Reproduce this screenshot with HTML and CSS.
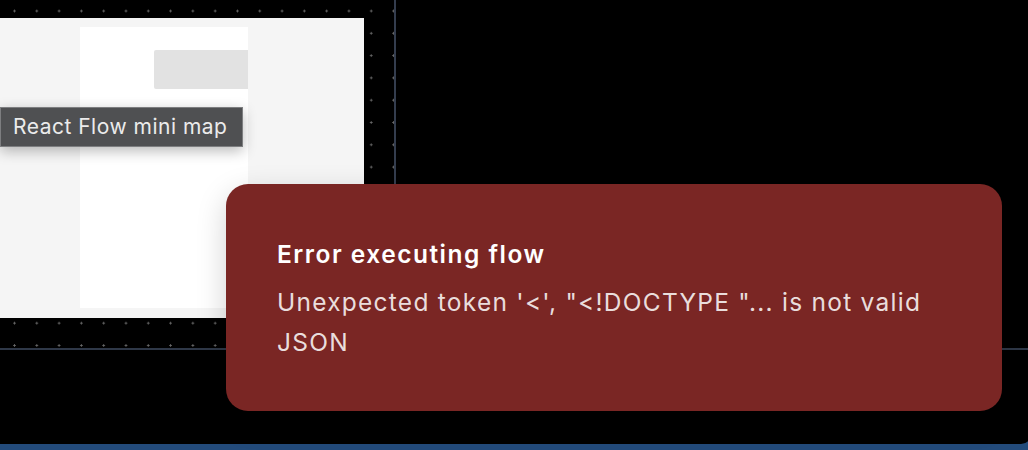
FILE: index.html
```html
<!DOCTYPE html>
<html lang="en">
<head>
<meta charset="utf-8">
<title>Flow</title>
<link rel="stylesheet" href="styles.css">
</head>
<body>
<div class="app">
  <div class="top">
    <div class="pane">
      <div class="minimap">
        <div class="viewport">
          <div class="node"></div>
        </div>
      </div>
      <div class="tooltip">React Flow mini map</div>
    </div>
    <div class="side"></div>
  </div>
  <div class="bottom"></div>
  <div class="toast">
    <div class="toast-title">Error executing flow</div>
    <div class="toast-desc">Unexpected token '&lt;', "&lt;!DOCTYPE "... is not valid JSON</div>
  </div>
</div>
</body>
</html>
```

FILE: styles.css
```css
html, body {
  margin: 0;
  padding: 0;
  height: 100%;
}
body {
  background: #234b7b;
  overflow: hidden;
  font-family: Inter, "Noto Sans", sans-serif;
}
.app {
  position: relative;
  width: calc(100% + 3px);
  height: 444px;
  background: #000;
  border-bottom-right-radius: 10px;
  display: flex;
  flex-direction: column;
}
.top {
  display: flex;
  height: 350px;
  border-bottom: 2px solid #2f3848;
  box-sizing: border-box;
}
.pane {
  position: relative;
  width: 394px;
  border-right: 2px solid #343d4e;
  background-color: #000;
  background-image: radial-gradient(circle, #6a6a6a 0.9px, transparent 1.3px);
  background-size: 22.3px 22.3px;
  background-position: 3.35px -0.15px;
}
.side {
  flex: 1;
}
.bottom {
  flex: 1;
}
.minimap {
  position: absolute;
  left: 0;
  top: 18px;
  width: 364px;
  height: 300px;
  background: #f5f5f5;
}
.viewport {
  position: absolute;
  left: 80px;
  top: 9px;
  width: 168px;
  height: 281px;
  background: #fff;
}
.node {
  position: absolute;
  left: 74px;
  top: 23px;
  width: 94px;
  height: 39px;
  background: #e2e2e2;
  border-radius: 2px 0 0 2px;
}
.tooltip {
  position: absolute;
  left: 0;
  top: 107px;
  width: 243px;
  height: 40px;
  box-sizing: border-box;
  padding: 0 0 1px 12px;
  display: flex;
  align-items: center;
  white-space: nowrap;
  background: #4f5052;
  border: 1px solid #7d7e80;
  color: #ebebeb;
  font-size: 21px;
  letter-spacing: 0.5px;
  box-shadow: 0 4px 14px rgba(0, 0, 0, 0.28);
}
.toast {
  position: absolute;
  left: 226px;
  top: 184px;
  width: 776px;
  height: 227px;
  box-sizing: border-box;
  padding: 54px 51px 0 51px;
  background: #7a2624;
  border-radius: 22px;
  box-shadow: 0 10px 30px rgba(0, 0, 0, 0.18);
  color: #fff;
}
.toast-title {
  font-size: 24.5px;
  line-height: 32px;
  font-weight: 600;
  letter-spacing: 1.5px;
  margin-bottom: 12px;
}
.toast-desc {
  font-size: 24.5px;
  line-height: 40px;
  letter-spacing: 1.25px;
  color: rgba(255, 255, 255, 0.86);
}
```
